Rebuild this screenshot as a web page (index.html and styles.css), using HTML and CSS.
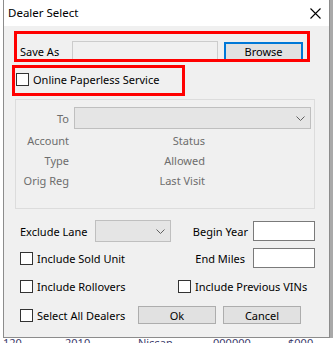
FILE: index.html
```html
<!DOCTYPE html>
<html lang="en">
<head>
    <meta charset="UTF-8">
    <title>Dealer Select</title>
    <link rel="stylesheet" href="styles.css">
</head>
<body>
    <div class="desktop">
        <div class="left-gutter"></div>

        <!-- dialog window -->
        <div class="window">
            <div class="titlebar">
                <span class="title">Dealer Select</span>
                <svg class="close" width="11" height="11" viewBox="0 0 11 11">
                    <path d="M0.5 0.5 L10.5 10.5 M10.5 0.5 L0.5 10.5" stroke="#000" stroke-width="1.1" fill="none"/>
                </svg>
            </div>

            <div class="dialog-body">
                <div class="row-save">
                    <span class="save-label">Save As</span>
                    <div class="textbox disabled save-box"></div>
                    <div class="button default browse">Browse</div>
                </div>

                <div class="row-paperless">
                    <span class="checkbox"></span>
                    <span class="check-label">Online Paperless Service</span>
                </div>

                <div class="group">
                    <div class="to-row">
                        <span class="dim-label">To</span>
                        <div class="combo disabled to-combo">
                            <svg class="chevron" width="9" height="5" viewBox="0 0 9 5"><path d="M0.5 0.5 L4.5 4.5 L8.5 0.5" stroke="#606060" fill="none"/></svg>
                        </div>
                    </div>
                    <div class="info-row">
                        <span class="dim-label">Account</span>
                        <span class="dim-label col2">Status</span>
                    </div>
                    <div class="info-row">
                        <span class="dim-label">Type</span>
                        <span class="dim-label col2">Allowed</span>
                    </div>
                    <div class="info-row">
                        <span class="dim-label">Orig Reg</span>
                        <span class="dim-label col2">Last Visit</span>
                    </div>
                </div>

                <div class="row-a">
                    <span class="lane-label">Exclude Lane</span>
                    <div class="combo disabled lane-combo">
                        <svg class="chevron" width="9" height="5" viewBox="0 0 9 5"><path d="M0.5 0.5 L4.5 4.5 L8.5 0.5" stroke="#606060" fill="none"/></svg>
                    </div>
                    <span class="right-label">Begin Year</span>
                    <div class="textbox year-box"></div>
                </div>

                <div class="row-b">
                    <div class="check-item">
                        <span class="checkbox"></span>
                        <span class="check-label">Include Sold Unit</span>
                    </div>
                    <span class="right-label miles-label">End Miles</span>
                    <div class="textbox miles-box"></div>
                </div>

                <div class="row-c">
                    <div class="check-item rollovers">
                        <span class="checkbox"></span>
                        <span class="check-label">Include Rollovers</span>
                    </div>
                    <div class="check-item">
                        <span class="checkbox"></span>
                        <span class="check-label">Include Previous VINs</span>
                    </div>
                </div>

                <div class="row-d">
                    <div class="check-item all-dealers">
                        <span class="checkbox"></span>
                        <span class="check-label">Select All Dealers</span>
                    </div>
                    <div class="button ok">Ok</div>
                    <div class="button cancel">Cancel</div>
                </div>
            </div>
        </div>

        <div class="right-strip"></div>
    </div>

    <!-- grid rows of the page behind the dialog -->
    <div class="behind-row">
        <span class="cell c1">120</span>
        <span class="cell c2">2010</span>
        <span class="cell c3">Nissan</span>
        <span class="cell c4">000000</span>
        <span class="cell c5">$000</span>
    </div>

    <!-- annotation boxes drawn over the screenshot -->
    <div class="mark mark-save"></div>
    <div class="mark mark-paperless"></div>
</body>
</html>
```

FILE: styles.css
```css
* {
    box-sizing: border-box;
}
html, body {
    margin: 0;
    padding: 0;
}
body {
    width: 333px;
    height: 343px;
    overflow: hidden;
    position: relative;
    background-color: #fff;
    font-family: "Noto Sans", "Open Sans", sans-serif;
    font-size: 11px;
    color: #000;
}
.desktop {
    display: flex;
    height: 338px;
}
.left-gutter {
    width: 3px;
    background-color: #fff;
}
.right-strip {
    width: 3px;
    background-color: #a9a9a9;
}
.window {
    width: 327px;
    height: 338px;
    border: 1px solid #8c8c8c;
    border-top: none;
    background-color: #f0f0f0;
    display: flex;
    flex-direction: column;
}
.titlebar {
    height: 26px;
    flex: none;
    background-color: #fff;
    display: flex;
    align-items: center;
    justify-content: space-between;
    padding: 0 8px 1px 4px;
}
.title {
    font-size: 11.5px;
}
.close {
    margin-top: 1px;
}
.dialog-body {
    flex: 1;
}

/* controls */
.textbox {
    height: 20px;
    border: 1px solid #7a7a7a;
    background-color: #fff;
}
.textbox.disabled {
    border-color: #cccccc;
    background-color: #f0f0f0;
}
.combo {
    height: 22px;
    border: 1px solid #adadad;
    background-color: #e5e5e5;
    display: flex;
    align-items: center;
    justify-content: flex-end;
    padding-right: 5px;
}
.combo.disabled {
    border-color: #bfbfbf;
}
.button {
    border: 1px solid #adadad;
    background-color: #e1e1e1;
    display: flex;
    align-items: center;
    justify-content: center;
}
.button.default {
    border: 2px solid #0078d7;
}
.checkbox {
    width: 13px;
    height: 13px;
    border: 1px solid #333;
    background-color: #fff;
    flex: none;
}
.check-item {
    display: flex;
    align-items: center;
}
.check-label {
    margin-left: 4px;
    white-space: nowrap;
}
.dim-label {
    color: #6d6d6d;
    text-align: right;
    white-space: nowrap;
}

/* save as row */
.row-save {
    margin-top: 15px;
    height: 20px;
    display: flex;
    align-items: center;
    padding-left: 16px;
}
.save-label {
    width: 52px;
}
.save-box {
    width: 146px;
}
.browse {
    width: 79px;
    height: 19px;
    margin-left: 6px;
}

/* online paperless */
.row-paperless {
    margin-top: 12px;
    height: 13px;
    display: flex;
    align-items: center;
    padding-left: 12px;
}

/* disabled group */
.group {
    margin: 13px 0 0 11px;
    width: 300px;
    height: 110px;
    border: 1px solid #dcdcdc;
    padding-top: 7px;
}
.to-row {
    display: flex;
    align-items: center;
    height: 22px;
    margin-bottom: 1px;
}
.to-row .dim-label,
.info-row .dim-label {
    width: 53px;
}
.to-combo {
    width: 237px;
    margin-left: 5px;
}
.info-row {
    display: flex;
    align-items: center;
    height: 20px;
}
.info-row .col2 {
    width: 136px;
}

/* lower options */
.row-a {
    margin-top: 11px;
    height: 22px;
    display: flex;
    align-items: center;
    padding-left: 16px;
}
.lane-label {
    width: 75px;
}
.lane-combo {
    width: 76px;
}
.right-label {
    width: 77px;
    text-align: right;
    white-space: nowrap;
}
.year-box {
    width: 62px;
    margin-left: 5px;
}
.row-b {
    margin-top: 6px;
    height: 20px;
    display: flex;
    align-items: center;
    padding-left: 16px;
}
.row-b .check-item {
    width: 151px;
}
.miles-label {
    width: 74px;
}
.miles-box {
    width: 62px;
    margin-left: 8px;
}
.row-c {
    margin-top: 12px;
    height: 13px;
    display: flex;
    align-items: center;
    padding-left: 16px;
}
.rollovers {
    width: 158px;
}
.row-d {
    margin-top: 13px;
    height: 18px;
    display: flex;
    align-items: center;
    padding-left: 16px;
}
.all-dealers {
    width: 118px;
}
.ok, .cancel {
    width: 78px;
    height: 18px;
}
.cancel {
    margin-left: 7px;
}

/* page behind the dialog */
.behind-row {
    position: absolute;
    left: 0;
    top: 335px;
    width: 333px;
    height: 20px;
    color: #3a3a6a;
}
.cell {
    position: absolute;
    top: 0;
}
.c1 { left: 3px; }
.c2 { left: 65px; }
.c3 { left: 138px; }
.c4 { left: 213px; }
.c5 { left: 288px; }

/* red annotation boxes */
.mark {
    position: absolute;
    border: 3px solid #f00;
}
.mark-save {
    left: 14px;
    top: 31px;
    width: 296px;
    height: 31px;
}
.mark-paperless {
    left: 12px;
    top: 65px;
    width: 173px;
    height: 31px;
}
```
